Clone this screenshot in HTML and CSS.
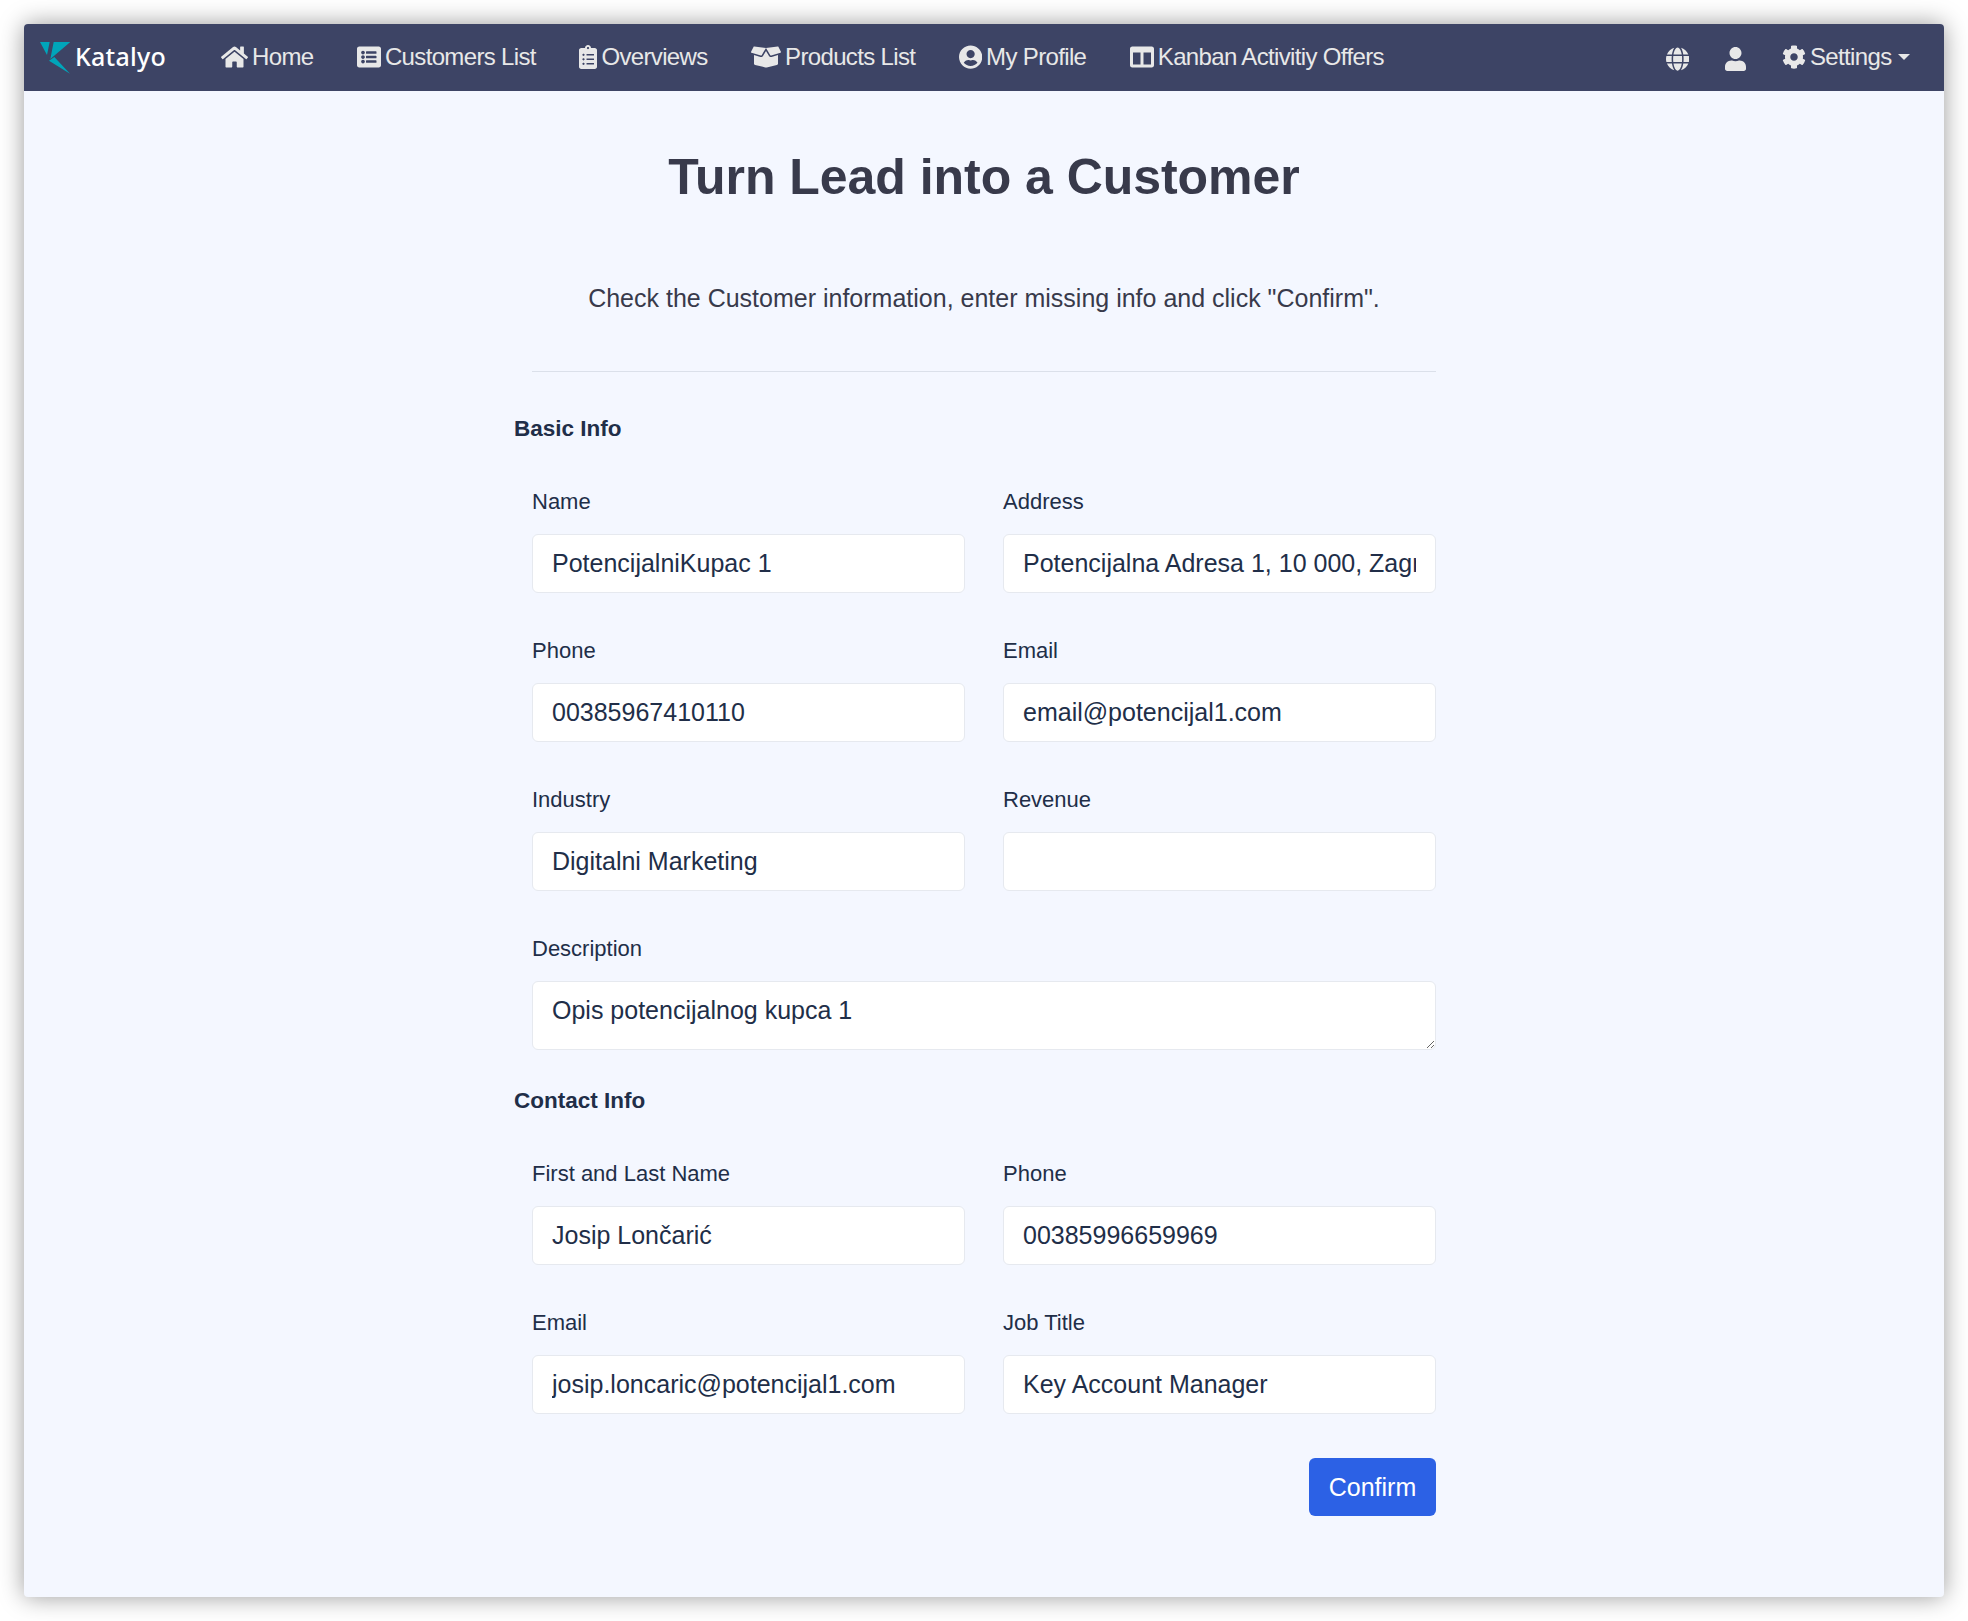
FILE: index.html
```html
<!DOCTYPE html>
<html lang="en">
<head>
<meta charset="utf-8">
<title>Turn Lead into a Customer</title>
<link rel="stylesheet" href="styles.css">
</head>
<body>
<div class="window">
  <nav class="navbar">
    <a class="brand">
      <svg class="brand-mark" viewBox="0 0 90 96"><path d="M0 0H29L21 39ZM41 0H91L31 51ZM27 56L43 45L91 96Z"/></svg>
      <span class="brand-name">Katalyo</span>
    </a>
    <div class="menu">
      <a class="item"><svg class="icon w-576" viewBox="0 0 576 512"><path d="M280.37 148.26L96 300.11V464a16 16 0 0 0 16 16l112.06-.29a16 16 0 0 0 15.92-16V368a16 16 0 0 1 16-16h64a16 16 0 0 1 16 16v95.64a16 16 0 0 0 16 16.05L464 480a16 16 0 0 0 16-16V300L295.67 148.26a12.19 12.19 0 0 0-15.3 0zM571.6 251.47L488 182.56V44.05a12 12 0 0 0-12-12h-56a12 12 0 0 0-12 12v72.61L318.47 43a48 48 0 0 0-61 0L4.34 251.47a12 12 0 0 0-1.6 16.9l25.5 31A12 12 0 0 0 45.15 301l235.22-193.74a12.19 12.19 0 0 1 15.3 0L530.9 301a12 12 0 0 0 16.9-1.6l25.5-31a12 12 0 0 0-1.7-16.93z"/></svg><span>Home</span></a>
      <a class="item"><svg class="icon" viewBox="0 0 512 512"><path d="M464 480H48c-26.510 0-48-21.490-48-48V80c0-26.510 21.490-48 48-48h416c26.510 0 48 21.490 48 48v352c0 26.510-21.490 48-48 48zM128 120c-22.091 0-40 17.909-40 40s17.909 40 40 40 40-17.909 40-40-17.909-40-40-40zm0 96c-22.091 0-40 17.909-40 40s17.909 40 40 40 40-17.909 40-40-17.909-40-40-40zm0 96c-22.091 0-40 17.909-40 40s17.909 40 40 40 40-17.909 40-40-17.909-40-40-40zm288-136v-32c0-6.627-5.373-12-12-12H204c-6.627 0-12 5.373-12 12v32c0 6.627 5.373 12 12 12h200c6.627 0 12-5.373 12-12zm0 96v-32c0-6.627-5.373-12-12-12H204c-6.627 0-12 5.373-12 12v32c0 6.627 5.373 12 12 12h200c6.627 0 12-5.373 12-12zm0 96v-32c0-6.627-5.373-12-12-12H204c-6.627 0-12 5.373-12 12v32c0 6.627 5.373 12 12 12h200c6.627 0 12-5.373 12-12z"/></svg><span>Customers List</span></a>
      <a class="item"><svg class="icon w-384" viewBox="0 0 384 512"><path d="M336 64h-80c0-35.300-28.700-64-64-64s-64 28.700-64 64H48C21.500 64 0 85.500 0 112v352c0 26.500 21.500 48 48 48h288c26.500 0 48-21.500 48-48V112c0-26.500-21.500-48-48-48zM96 424c-13.300 0-24-10.700-24-24s10.700-24 24-24 24 10.700 24 24-10.700 24-24 24zm0-96c-13.300 0-24-10.700-24-24s10.700-24 24-24 24 10.700 24 24-10.700 24-24 24zm0-96c-13.300 0-24-10.700-24-24s10.700-24 24-24 24 10.700 24 24-10.700 24-24 24zm96-192c13.300 0 24 10.700 24 24s-10.700 24-24 24-24-10.700-24-24 10.700-24 24-24zm128 368c0 4.400-3.600 8-8 8H168c-4.400 0-8-3.600-8-8v-16c0-4.400 3.600-8 8-8h144c4.400 0 8 3.600 8 8v16zm0-96c0 4.400-3.600 8-8 8H168c-4.400 0-8-3.600-8-8v-16c0-4.400 3.600-8 8-8h144c4.400 0 8 3.600 8 8v16zm0-96c0 4.400-3.600 8-8 8H168c-4.400 0-8-3.600-8-8v-16c0-4.400 3.600-8 8-8h144c4.400 0 8 3.600 8 8v16z"/></svg><span>Overviews</span></a>
      <a class="item"><svg class="icon w-640" viewBox="0 0 640 512"><path d="M425.700 256c-16.900 0-32.800-9-41.400-23.400L320 126l-64.200 106.600c-8.700 14.500-24.600 23.500-41.500 23.500-4.500 0-9-.6-13.300-1.900L64 215v178c0 14.700 10 27.500 24.200 31l216.200 54.100c10.200 2.500 20.900 2.500 31 0L551.800 424c14.200-3.600 24.200-16.400 24.200-31V215l-137 39.100c-4.300 1.300-8.800 1.900-13.300 1.900zm212.600-112.200L586.800 41c-3.100-6.200-9.800-9.800-16.700-8.900L320 64l91.700 152.100c3.800 6.300 11.400 9.300 18.500 7.300l197.900-56.500c9.900-2.900 14.700-13.900 10.200-23.100zM53.200 41L1.700 143.800c-4.600 9.200.3 20.200 10.100 23l197.900 56.500c7.100 2 14.700-1 18.500-7.300L320 64 69.800 32.100c-6.900-.8-13.500 2.700-16.600 8.900z"/></svg><span>Products List</span></a>
      <a class="item"><svg class="icon w-496" viewBox="0 0 496 512"><path d="M248 8C111 8 0 119 0 256s111 248 248 248 248-111 248-248S385 8 248 8zm0 96c48.600 0 88 39.400 88 88s-39.400 88-88 88-88-39.400-88-88 39.400-88 88-88zm0 344c-58.700 0-111.300-26.600-146.500-68.200 18.800-35.400 55.600-59.800 98.500-59.800 2.400 0 4.800.4 7.100 1.100 13 4.200 26.600 6.900 40.900 6.900 14.300 0 28-2.700 40.900-6.900 2.300-.7 4.700-1.100 7.100-1.100 42.900 0 79.700 24.400 98.500 59.800C359.300 421.400 306.700 448 248 448z"/></svg><span>My Profile</span></a>
      <a class="item"><svg class="icon" viewBox="0 0 512 512"><path d="M464 32H48C21.490 32 0 53.490 0 80v352c0 26.510 21.490 48 48 48h416c26.510 0 48-21.490 48-48V80c0-26.510-21.490-48-48-48zM224 416H64V160h160v256zm224 0H288V160h160v256z"/></svg><span>Kanban Activitiy Offers</span></a>
    </div>
    <div class="tools">
      <svg class="icon w-496 low" viewBox="0 0 496 512"><path d="M336.500 160C322 70.700 287.800 8 248 8s-74 62.700-88.500 152h177zM152 256c0 22.200 1.200 43.500 3.300 64h185.300c2.100-20.500 3.300-41.800 3.300-64s-1.200-43.500-3.300-64H155.300c-2.100 20.500-3.300 41.800-3.300 64zm324.700-96c-28.600-67.900-86.500-120.400-158-141.600 24.400 33.800 41.200 84.700 50 141.600h108zM177.200 18.400C105.800 39.600 47.800 92.100 19.300 160h108c8.700-56.900 25.500-107.800 49.900-141.600zM487.400 192H372.700c2.100 21 3.300 42.500 3.300 64s-1.200 43-3.300 64h114.600c5.500-20.500 8.600-41.800 8.600-64s-3.100-43.500-8.500-64zM120 256c0-21.500 1.200-43 3.300-64H8.600C3.200 212.500 0 233.800 0 256s3.200 43.500 8.600 64h114.600c-2-21-3.200-42.500-3.200-64zm39.500 96c14.500 89.300 48.700 152 88.500 152s74-62.700 88.500-152h-177zm159.300 141.600c71.400-21.200 129.400-73.700 158-141.600h-108c-8.800 56.900-25.600 107.800-50 141.600zM19.300 352c28.600 67.900 86.500 120.400 158 141.600-24.400-33.800-41.200-84.700-50-141.600h-108z"/></svg>
      <svg class="icon w-448 low" viewBox="0 0 448 512"><path d="M224 256c70.700 0 128-57.300 128-128S294.700 0 224 0 96 57.300 96 128s57.300 128 128 128zm89.600 32h-16.700c-22.200 10.200-46.900 16-72.900 16s-50.600-5.800-72.900-16h-16.700C60.200 288 0 348.200 0 422.400V464c0 26.500 21.500 48 48 48h352c26.500 0 48-21.500 48-48v-41.600c0-74.200-60.200-134.400-134.400-134.400z"/></svg>
      <a class="item"><svg class="icon" viewBox="0 0 512 512"><path d="M487.400 315.700l-42.600-24.600c4.300-23.200 4.300-47 0-70.200l42.600-24.600c4.900-2.800 7.100-8.600 5.500-14-11.100-35.600-30-67.800-54.700-94.600-3.800-4.100-10-5.100-14.800-2.300L380.800 110c-17.900-15.400-38.500-27.300-60.800-35.100V25.800c0-5.600-3.900-10.500-9.400-11.700-36.700-8.200-74.300-7.800-109.200 0-5.500 1.200-9.400 6.100-9.400 11.700V75c-22.200 7.900-42.800 19.800-60.800 35.100L88.700 85.500c-4.900-2.800-11-1.900-14.800 2.300-24.700 26.700-43.600 58.900-54.700 94.600-1.700 5.400.6 11.200 5.500 14L67.300 221c-4.300 23.200-4.300 47 0 70.200l-42.600 24.600c-4.900 2.800-7.100 8.600-5.500 14 11.100 35.600 30 67.800 54.700 94.600 3.800 4.100 10 5.100 14.800 2.300l42.600-24.600c17.900 15.400 38.500 27.300 60.800 35.100v49.200c0 5.600 3.900 10.500 9.400 11.700 36.700 8.200 74.300 7.800 109.200 0 5.500-1.200 9.400-6.100 9.400-11.700v-49.200c22.200-7.900 42.800-19.800 60.800-35.100l42.600 24.600c4.900 2.800 11 1.900 14.800-2.300 24.700-26.700 43.600-58.900 54.700-94.600 1.500-5.500-.7-11.300-5.600-14.100zM256 336c-44.100 0-80-35.900-80-80s35.900-80 80-80 80 35.900 80 80-35.900 80-80 80z"/></svg><span>Settings</span><i class="caret"></i></a>
    </div>
  </nav>
  <main class="page">
    <h1 class="title">Turn Lead into a Customer</h1>
    <p class="lead">Check the Customer information, enter missing info and click "Confirm".</p>
    <h2 class="section">Basic Info</h2>
    <form class="grid">
      <label class="field"><span>Name</span><input value="PotencijalniKupac 1"></label>
      <label class="field"><span>Address</span><input value="Potencijalna Adresa 1, 10 000, Zagreb"></label>
      <label class="field"><span>Phone</span><input value="00385967410110"></label>
      <label class="field"><span>Email</span><input value="email@potencijal1.com"></label>
      <label class="field"><span>Industry</span><input value="Digitalni Marketing"></label>
      <label class="field"><span>Revenue</span><input value=""></label>
      <label class="field wide"><span>Description</span><textarea rows="1">Opis potencijalnog kupca 1</textarea></label>
    </form>
    <h2 class="section contact">Contact Info</h2>
    <form class="grid">
      <label class="field"><span>First and Last Name</span><input value="Josip Lončarić"></label>
      <label class="field"><span>Phone</span><input value="00385996659969"></label>
      <label class="field"><span>Email</span><input value="josip.loncaric@potencijal1.com"></label>
      <label class="field"><span>Job Title</span><input value="Key Account Manager"></label>
    </form>
    <div class="actions"><button class="confirm" type="button">Confirm</button></div>
  </main>
</div>
</body>
</html>
```
FILE: styles.css
```css
* { box-sizing: border-box; }
body {
  margin: 0;
  padding: 24px;
  background: #fff;
  font-family: "Liberation Sans", Arial, sans-serif;
  font-size: 25px;
  color: #212e48;
}
.window {
  height: 1573px;
  border-radius: 4px;
  background: #f4f7ff;
  box-shadow: 0 0 25px rgba(0, 0, 0, .4);
  overflow: hidden;
}
.navbar {
  display: flex;
  align-items: center;
  height: 67px;
  padding: 0 34px 2px 16px;
  background: #3d4465;
  color: #e8e8e8;
  font-size: 24px;
  line-height: 30px;
  letter-spacing: -.65px;
}
.brand { display: flex; align-items: center; width: 181px; }
.brand-mark { width: 30px; height: 32px; margin-top: 2px; fill: #00a5ba; }
.brand-name {
  margin: 0 0 2px 5px;
  font: 500 25px/30px "Noto Sans", sans-serif;
  letter-spacing: .25px;
  color: #fff;
}
.menu { display: flex; gap: 43.500px; }
.item { display: flex; align-items: center; gap: 4px; white-space: nowrap; }
.icon { width: 24px; height: 24px; fill: currentColor; flex: none; }
.w-576 { width: 27px; }
.w-384 { width: 18px; }
.w-640 { width: 30px; }
.w-496 { width: 23.250px; }
.w-448 { width: 21px; }
.tools { display: flex; align-items: center; margin-left: auto; }
.low { margin-top: 5px; margin-right: 36px; }
.caret {
  margin-left: 2.500px;
  border: 6px solid transparent;
  border-top-color: currentColor;
  border-bottom: 0;
}
.page { width: 904px; margin: 0 auto; }
.title {
  margin: 0;
  padding-top: 56px;
  font-size: 50px;
  line-height: 60px;
  letter-spacing: -.04px;
  text-align: center;
  color: #383a4b;
}
.lead {
  margin: 0;
  padding: 72px 0 54px;
  line-height: 38px;
  text-align: center;
  color: #383a4b;
  border-bottom: 1px solid #dbe0ea;
}
.section {
  margin: 40px 0 0 -18px;
  font-size: 22.500px;
  line-height: 34px;
}
.grid {
  display: grid;
  grid-template-columns: 433px 433px;
  column-gap: 38px;
  row-gap: 41px;
  margin-top: 39px;
}
.field { display: block; }
.field > span { display: block; font-size: 22px; line-height: 33px; margin-bottom: 16px; }
.field input, .field textarea {
  display: block;
  width: 100%;
  height: 59px;
  margin: 0;
  padding: 10px 19px;
  border: 1px solid #e6e9ef;
  border-radius: 6px;
  background: #fff;
  color: #212e48;
  font: 25px/37px "Liberation Sans", Arial, sans-serif;
}
.field textarea { height: 69px; overflow: hidden; }
.wide { grid-column: 1 / -1; }
.contact { margin-top: 34px; }
.actions { display: flex; justify-content: flex-end; margin-top: 44px; }
.confirm {
  width: 127px;
  height: 58px;
  padding: 0;
  border: 0;
  border-radius: 6px;
  background: #2c61e5;
  color: #fff;
  font: 25px "Liberation Sans", Arial, sans-serif;
}
```
